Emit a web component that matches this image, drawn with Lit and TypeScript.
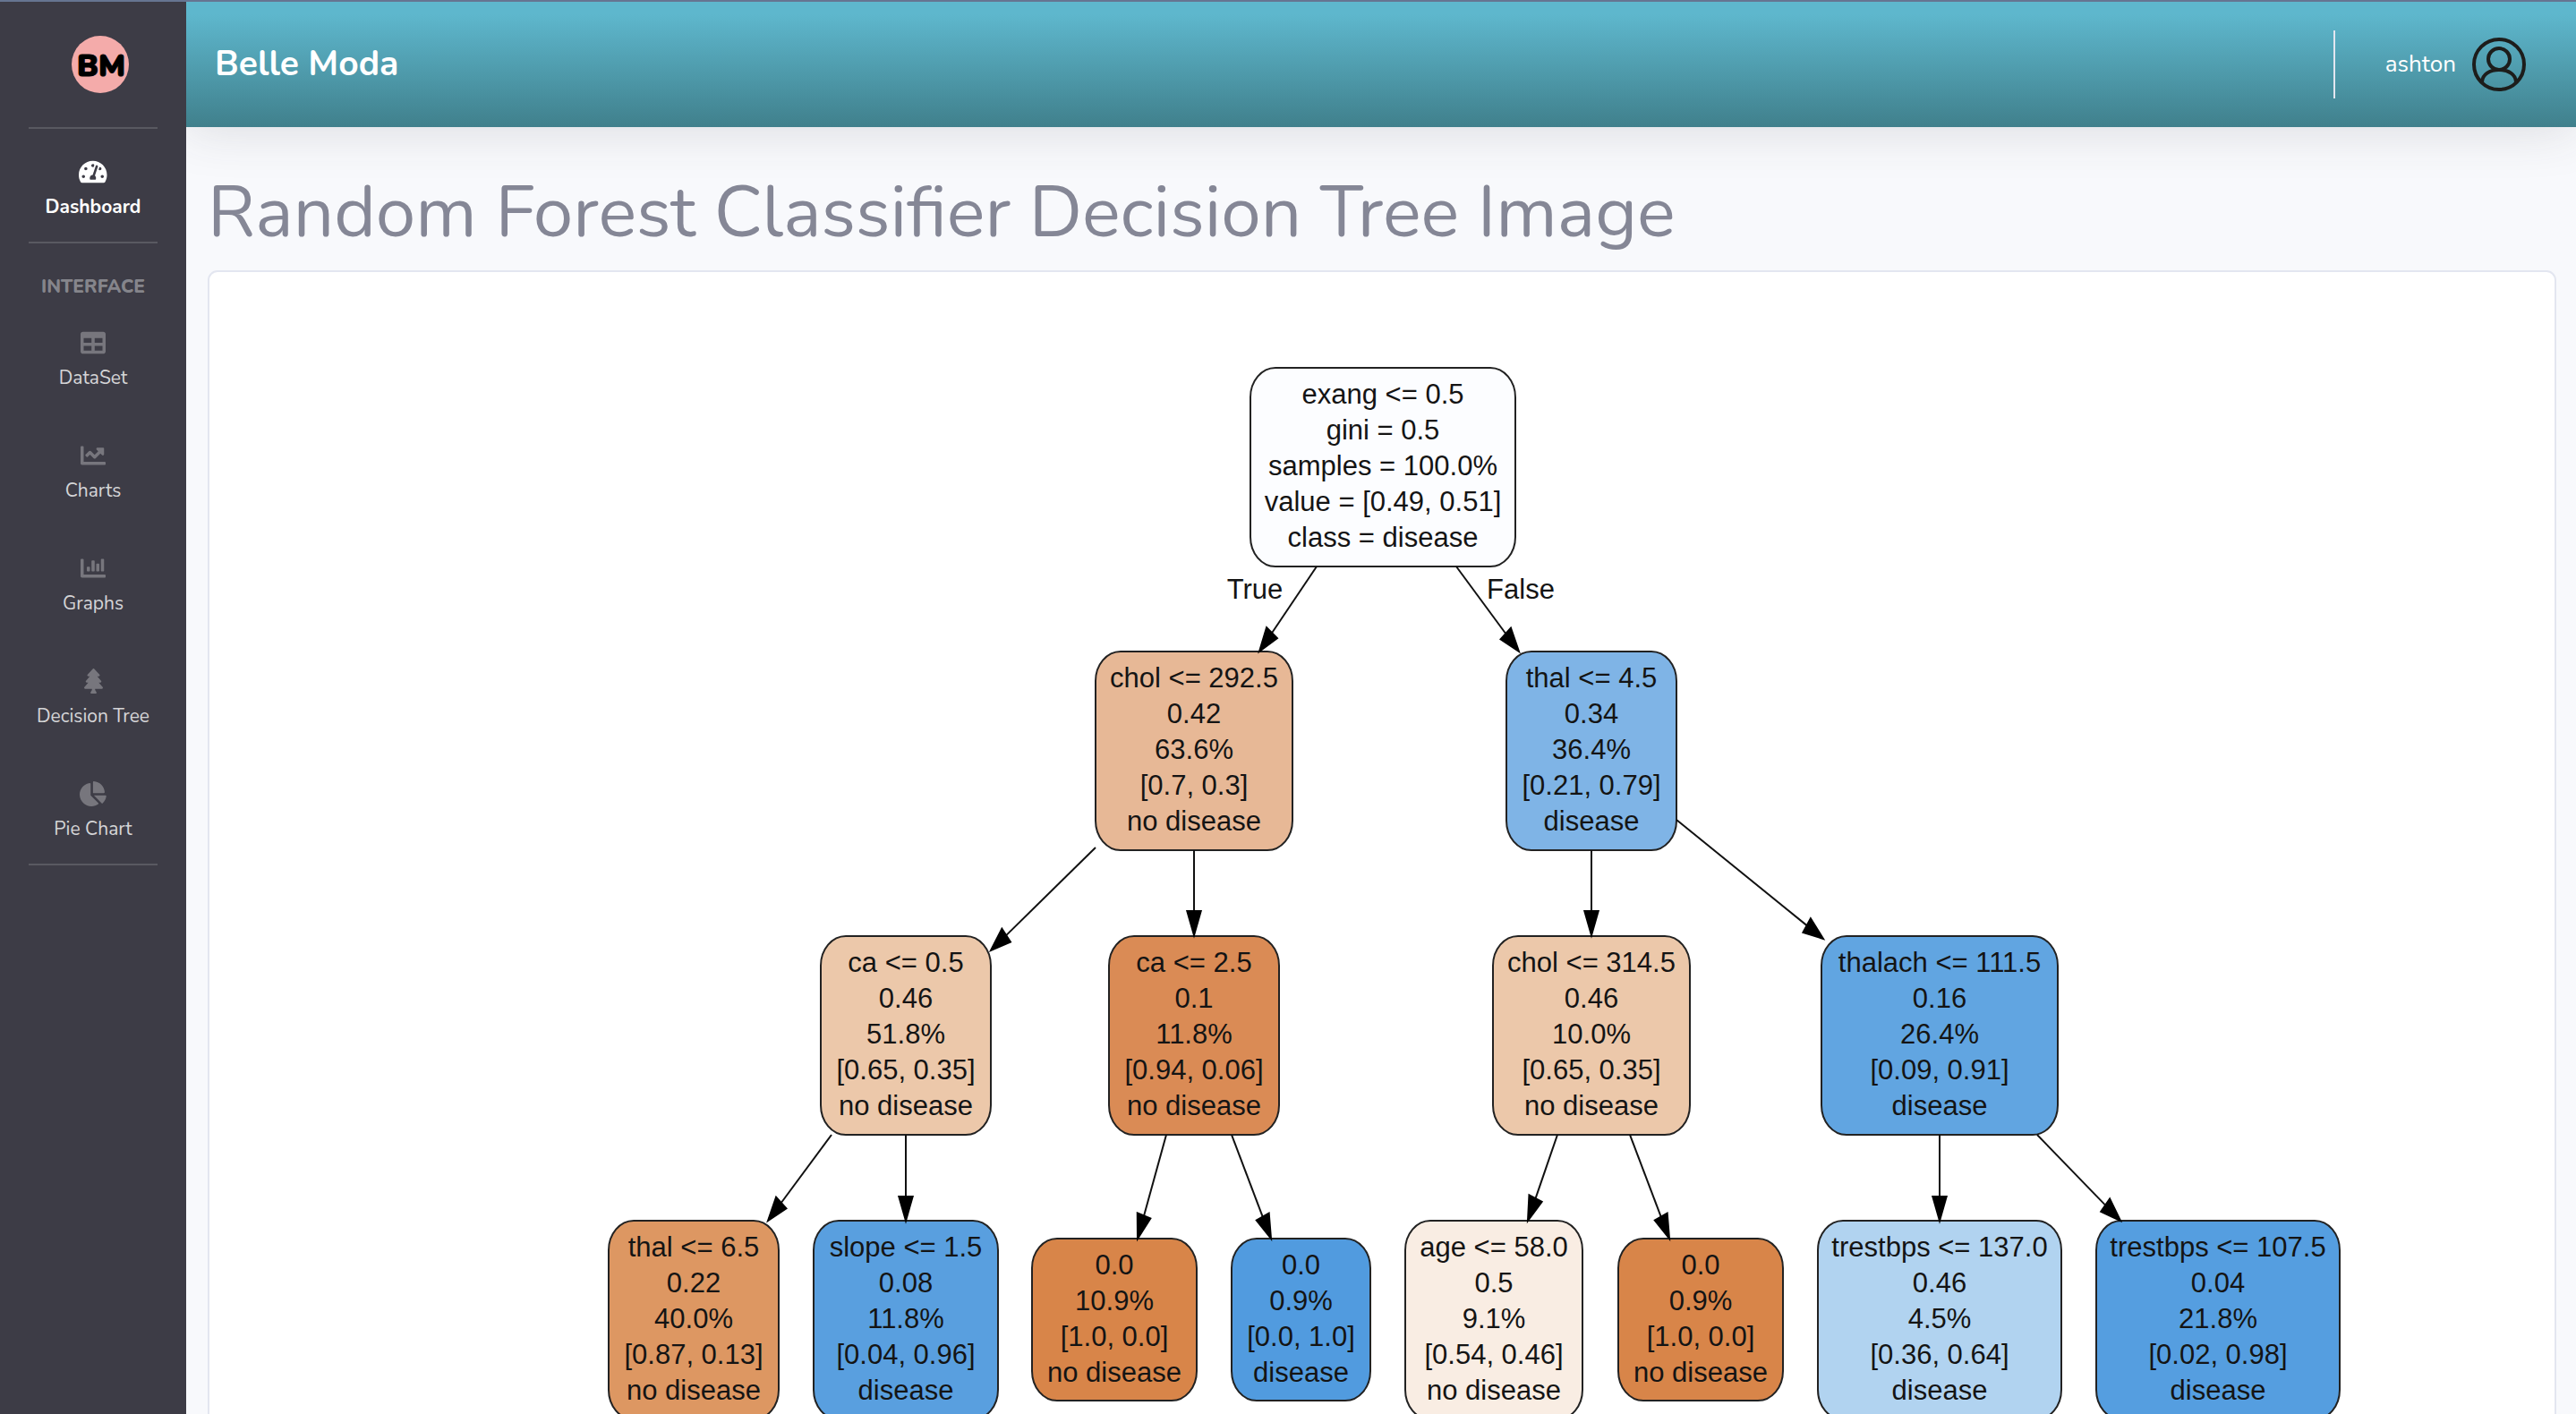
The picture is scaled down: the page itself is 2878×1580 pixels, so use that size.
import { LitElement, html, svg, css } from "lit";
import { customElement } from "lit/decorators.js";
import { classMap } from "lit/directives/class-map.js";

interface NavItem {
  label: string;
  icon: string;
  box: string;
}

interface TreeNode {
  x: number;
  y: number;
  w: number;
  h: number;
  fill: string;
  lines: string[];
}

type Edge = [number, number, number, number];

const DASHBOARD: NavItem = {
  label: "Dashboard",
  box: "0 0 576 512",
  icon: "M288 32C128.94 32 0 160.94 0 320c0 52.8 14.25 102.26 39.06 144.8 5.61 9.62 16.3 15.2 27.44 15.2h443c11.14 0 21.83-5.58 27.44-15.2C561.75 422.26 576 372.8 576 320c0-159.06-128.94-288-288-288zm0 64c14.71 0 26.58 10.13 30.32 23.65-1.11 2.26-2.64 4.23-3.45 6.67l-9.22 27.67c-5.13 3.49-10.97 6.01-17.64 6.01-17.67 0-32-14.33-32-32S270.33 96 288 96zM96 384c-17.67 0-32-14.33-32-32s14.33-32 32-32 32 14.33 32 32-14.33 32-32 32zm48-160c-17.67 0-32-14.33-32-32s14.33-32 32-32 32 14.33 32 32-14.33 32-32 32zm246.77-72.41l-61.33 184C343.13 347.33 352 364.54 352 384c0 11.72-3.38 22.55-8.88 32H232.88c-5.5-9.45-8.88-20.28-8.88-32 0-33.94 26.5-61.43 59.9-63.59l61.34-184.01c4.17-12.56 17.73-19.45 30.36-15.17 12.57 4.19 19.35 17.79 15.17 30.36zm14.66 57.2l15.52-46.55c3.47-1.29 7.13-2.23 11.05-2.23 17.67 0 32 14.33 32 32s-14.33 32-32 32c-11.38-.01-20.89-6.28-26.57-15.22zM480 384c-17.67 0-32-14.33-32-32s14.33-32 32-32 32 14.33 32 32-14.33 32-32 32z",
};

const INTERFACE: NavItem[] = [
  {
    label: "DataSet",
    box: "0 0 512 512",
    icon: "M464 32H48C21.49 32 0 53.49 0 80v352c0 26.51 21.49 48 48 48h416c26.51 0 48-21.49 48-48V80c0-26.51-21.49-48-48-48zM224 416H64v-96h160v96zm0-160H64v-96h160v96zm224 160H288v-96h160v96zm0-160H288v-96h160v96z",
  },
  {
    label: "Charts",
    box: "0 0 512 512",
    icon: "M496 384H64V80c0-8.84-7.16-16-16-16H16C7.16 64 0 71.16 0 80v336c0 17.67 14.33 32 32 32h464c8.84 0 16-7.16 16-16v-32c0-8.84-7.16-16-16-16zM464 96H345.94c-21.38 0-32.09 25.85-16.97 40.97l32.4 32.4L288 242.75l-73.37-73.37c-12.5-12.5-32.76-12.5-45.25 0l-68.69 68.69c-6.25 6.25-6.25 16.38 0 22.63l22.62 22.62c6.25 6.25 16.38 6.25 22.63 0L192 237.25l73.37 73.37c12.5 12.5 32.76 12.5 45.25 0l96-96 32.4 32.4c15.12 15.12 40.97 4.41 40.97-16.97V112c.01-8.84-7.15-16-15.99-16z",
  },
  {
    label: "Graphs",
    box: "0 0 512 512",
    icon: "M332.8 320h38.4c6.4 0 12.8-6.4 12.8-12.8V172.8c0-6.4-6.4-12.8-12.8-12.8h-38.4c-6.4 0-12.8 6.4-12.8 12.8v134.4c0 6.4 6.4 12.8 12.8 12.8zm96 0h38.4c6.4 0 12.8-6.4 12.8-12.8V76.8c0-6.4-6.4-12.8-12.8-12.8h-38.4c-6.4 0-12.8 6.4-12.8 12.8v230.4c0 6.4 6.4 12.8 12.8 12.8zm-288 0h38.4c6.4 0 12.8-6.4 12.8-12.8v-70.4c0-6.4-6.4-12.8-12.8-12.8h-38.4c-6.4 0-12.8 6.4-12.8 12.8v70.4c0 6.4 6.4 12.8 12.8 12.8zm96 0h38.4c6.4 0 12.8-6.4 12.8-12.8V108.8c0-6.4-6.4-12.8-12.8-12.8h-38.4c-6.4 0-12.8 6.4-12.8 12.8v198.4c0 6.4 6.4 12.8 12.8 12.8zM496 384H64V80c0-8.84-7.16-16-16-16H16C7.16 64 0 71.16 0 80v336c0 17.67 14.33 32 32 32h464c8.84 0 16-7.16 16-16v-32c0-8.84-7.16-16-16-16z",
  },
  {
    label: "Decision Tree",
    box: "0 0 384 512",
    icon: "M378.31 378.49L298.42 288h30.63c9.01 0 16.98-5 20.78-13.06 3.8-8.04 2.55-17.26-3.28-24.05L268.42 160h28.89c9.1 0 17.3-5.35 20.86-13.61 3.52-8.13 1.86-17.59-4.24-24.08L203.66 4.83c-6.03-6.45-17.28-6.45-23.32 0L70.06 122.31c-6.1 6.49-7.75 15.95-4.24 24.08C69.38 154.65 77.59 160 86.69 160h28.89l-78.14 90.91c-5.81 6.78-7.06 15.99-3.27 24.04C37.97 283 45.93 288 54.95 288h30.63L5.69 378.49c-6 6.79-7.36 16.09-3.56 24.26 3.75 8.05 12 13.25 21.01 13.25H160v24.45l-30.29 48.4c-5.32 10.64 2.42 23.16 14.31 23.16h95.96c11.89 0 19.63-12.52 14.31-23.16L224 440.45V416h136.86c9.01 0 17.26-5.2 21.01-13.25 3.8-8.17 2.44-17.47-3.56-24.26z",
  },
  {
    label: "Pie Chart",
    box: "0 0 544 512",
    icon: "M527.79 288H290.5l158.03 158.03c6.04 6.04 15.98 6.53 22.19.68 38.7-36.46 65.32-85.61 73.13-140.86 1.34-9.46-6.51-17.85-16.06-17.85zm-15.83-64.8C503.72 103.74 408.26 8.28 288.8.04 279.68-.59 272 7.1 272 16.24V240h223.77c9.14 0 16.82-7.68 16.19-16.8zM224 288V50.71c0-9.55-8.39-17.4-17.84-16.06C86.99 51.49-4.1 155.6.14 280.37 4.5 408.51 114.83 513.59 243.03 511.98c50.4-.63 96.97-16.87 135.26-44.03 7.9-5.6 8.42-17.23 1.57-24.08L224 288z",
  },
];

const NODES: TreeNode[] = [
  { x: 1163, y: 107, w: 296, h: 222, fill: "#fcfdff", lines: ["exang <= 0.5", "gini = 0.5", "samples = 100.0%", "value = [0.49, 0.51]", "class = disease"] },
  { x: 990, y: 424, w: 220, h: 222, fill: "#e7b896", lines: ["chol <= 292.5", "0.42", "63.6%", "[0.7, 0.3]", "no disease"] },
  { x: 1449, y: 424, w: 190, h: 222, fill: "#7fb4e6", lines: ["thal <= 4.5", "0.34", "36.4%", "[0.21, 0.79]", "disease"] },
  { x: 683, y: 742, w: 190, h: 222, fill: "#ecc8aa", lines: ["ca <= 0.5", "0.46", "51.8%", "[0.65, 0.35]", "no disease"] },
  { x: 1005, y: 742, w: 190, h: 222, fill: "#da8b55", lines: ["ca <= 2.5", "0.1", "11.8%", "[0.94, 0.06]", "no disease"] },
  { x: 1434, y: 742, w: 220, h: 222, fill: "#ecc8aa", lines: ["chol <= 314.5", "0.46", "10.0%", "[0.65, 0.35]", "no disease"] },
  { x: 1801, y: 742, w: 264, h: 222, fill: "#61a5e1", lines: ["thalach <= 111.5", "0.16", "26.4%", "[0.09, 0.91]", "disease"] },
  { x: 446, y: 1060, w: 190, h: 222, fill: "#dd9762", lines: ["thal <= 6.5", "0.22", "40.0%", "[0.87, 0.13]", "no disease"] },
  { x: 675, y: 1060, w: 206, h: 222, fill: "#599fdf", lines: ["slope <= 1.5", "0.08", "11.8%", "[0.04, 0.96]", "disease"] },
  { x: 919, y: 1080, w: 184, h: 181, fill: "#d88549", lines: ["0.0", "10.9%", "[1.0, 0.0]", "no disease"] },
  { x: 1142, y: 1080, w: 155, h: 181, fill: "#519bdf", lines: ["0.0", "0.9%", "[0.0, 1.0]", "disease"] },
  { x: 1336, y: 1060, w: 198, h: 222, fill: "#f9ede3", lines: ["age <= 58.0", "0.5", "9.1%", "[0.54, 0.46]", "no disease"] },
  { x: 1574, y: 1080, w: 184, h: 181, fill: "#d88549", lines: ["0.0", "0.9%", "[1.0, 0.0]", "no disease"] },
  { x: 1797, y: 1060, w: 272, h: 222, fill: "#b1d3f0", lines: ["trestbps <= 137.0", "0.46", "4.5%", "[0.36, 0.64]", "disease"] },
  { x: 2108, y: 1060, w: 272, h: 222, fill: "#559ee0", lines: ["trestbps <= 107.5", "0.04", "21.8%", "[0.02, 0.98]", "disease"] },
];

const EDGES: Edge[] = [
  [1237, 329, 1173, 424],
  [1393, 329, 1463, 424],
  [990, 643, 873, 758],
  [1100, 646, 1100, 741],
  [1544, 646, 1544, 741],
  [1639, 612, 1803, 745],
  [695, 964, 624, 1060],
  [778, 964, 778, 1060],
  [1069, 964, 1037, 1080],
  [1142, 964, 1186, 1080],
  [1506, 964, 1473, 1060],
  [1587, 964, 1631, 1080],
  [1933, 964, 1933, 1060],
  [2042, 964, 2135, 1060],
];

const UNIT_X = 2.2;
const UNIT_Y = 2.7;

@customElement("decision-tree")
export class DecisionTree extends LitElement {
  static styles = css`
    :host {
      display: block;
    }
    .tree {
      display: block;
      width: 100%;
      height: auto;
    }
    .node {
      stroke: #222;
      stroke-width: 2;
    }
    .edge {
      fill: none;
      stroke: #111;
      stroke-width: 2;
    }
    .head {
      fill: #000;
      stroke: #000;
      stroke-width: 2;
    }
    .label {
      font-family: "Liberation Sans", Arial, sans-serif;
      font-size: 31px;
      fill: #141414;
      text-anchor: middle;
    }
  `;

  private edge([x1, y1, x2, y2]: Edge) {
    const ux = (x2 - x1) / UNIT_X;
    const uy = (y2 - y1) / UNIT_Y;
    const len = Math.hypot(ux, uy);
    const dx = ux / len;
    const dy = uy / len;
    const bx = x2 - dx * 10 * UNIT_X;
    const by = y2 - dy * 10 * UNIT_Y;
    const px = -dy * 3.5 * UNIT_X;
    const py = dx * 3.5 * UNIT_Y;
    return svg`
      <path class="edge" d="M${x1} ${y1}L${bx} ${by}"></path>
      <path class="head" d="M${x2} ${y2}L${bx + px} ${by + py}L${bx - px} ${by - py}Z"></path>`;
  }

  private node(n: TreeNode) {
    return svg`
      <rect class="node" x=${n.x} y=${n.y} width=${n.w} height=${n.h} rx="28" ry="33" fill=${n.fill}></rect>
      ${n.lines.map(
        (line, i) => svg`<text class="label" x=${n.x + n.w / 2} y=${n.y + 40 + i * 40}>${line}</text>`
      )}`;
  }

  render() {
    return html`
      <svg class="tree" viewBox="0 0 2620 1360" role="img" aria-label="Decision tree">
        ${NODES.map((n) => this.node(n))}
        ${EDGES.map((e) => this.edge(e))}
        <text class="label" x="1168" y="365">True</text>
        <text class="label" x="1465" y="365">False</text>
      </svg>
    `;
  }
}

@customElement("app-root")
export class AppRoot extends LitElement {
  static styles = css`
    :host {
      display: block;
      height: 100vh;
      overflow: hidden;
      box-sizing: border-box;
      border-top: 2px solid #667591;
      background: #f8f9fc;
      font-family: Nunito, Lato, sans-serif;
      color: #858796;
    }
    .shell {
      display: flex;
      min-height: 100%;
    }
    .sidebar {
      flex: none;
      width: 208px;
      box-sizing: border-box;
      padding: 0 32px;
      background: #3d3c46;
      text-align: center;
      z-index: 1;
    }
    .brand {
      display: flex;
      justify-content: center;
      align-items: center;
      height: 140px;
      padding-left: 16px;
    }
    .logo {
      width: 64px;
      height: 64px;
    }
    .logo-disc {
      fill: #f4abaa;
    }
    .logo-text {
      font-weight: 900;
      font-size: 34px;
      text-anchor: middle;
      stroke: #000;
      stroke-width: 1;
    }
    .rule {
      height: 2px;
      margin: 0;
      border: 0;
      background: rgba(255, 255, 255, 0.15);
    }
    .item {
      display: flex;
      flex-direction: column;
      align-items: center;
      gap: 12px;
      height: 126px;
      box-sizing: border-box;
      padding-top: 34px;
      margin: 0 -16px;
      color: rgba(255, 255, 255, 0.8);
      font-size: 21px;
      line-height: 26px;
      text-decoration: none;
      white-space: nowrap;
    }
    .item.active {
      color: #fff;
      font-weight: 700;
    }
    .icon {
      height: 28px;
      fill: rgba(255, 255, 255, 0.3);
    }
    .active .icon {
      fill: #fff;
    }
    .group {
      margin: 32px -16px 0;
      padding-top: 1px;
      font-size: 21px;
      line-height: 30px;
      font-weight: 800;
      color: rgba(255, 255, 255, 0.4);
    }
    .page {
      flex: 1;
      min-width: 0;
    }
    .topbar {
      display: flex;
      align-items: center;
      justify-content: space-between;
      height: 140px;
      box-sizing: border-box;
      padding: 0 56px 0 32px;
      background: linear-gradient(180deg, #5eb7cd 10%, #40808c 100%);
      box-shadow: 0 4px 56px rgba(58, 59, 69, 0.15);
    }
    .site {
      color: #fff;
      font-size: 39px;
      line-height: 48px;
      font-weight: 700;
      text-decoration: none;
    }
    .user {
      display: flex;
      align-items: center;
      gap: 18px;
      height: 76px;
      padding-left: 56px;
      border-left: 2px solid #e3e6f0;
      color: #fff;
      font-size: 26px;
      line-height: 32px;
      text-decoration: none;
    }
    .avatar {
      width: 60px;
      height: 60px;
      fill: none;
      stroke: #1d1d1b;
      stroke-width: 4;
    }
    .content {
      padding: 48px 22px 0 24px;
    }
    .title {
      margin: 0 0 16px;
      font-size: 80px;
      line-height: 96px;
      font-weight: 400;
    }
    .card {
      overflow: hidden;
      border: 2px solid #e3e6f0;
      border-radius: 11px;
      background: #fff;
    }
  `;

  private item(entry: NavItem, active = false) {
    return html`
      <a class=${classMap({ item: true, active })} href="#">
        <svg class="icon" viewBox=${entry.box} aria-hidden="true"><path d=${entry.icon}></path></svg>
        <span>${entry.label}</span>
      </a>
    `;
  }

  render() {
    return html`
      <div class="shell">
        <nav class="sidebar">
          <a class="brand" href="#" aria-label="Home">
            <svg class="logo" viewBox="0 0 64 64">
              <circle class="logo-disc" cx="32" cy="32" r="32"></circle>
              <text class="logo-text" x="33" y="45">BM</text>
            </svg>
          </a>
          <hr class="rule" />
          ${this.item(DASHBOARD, true)}
          <hr class="rule" />
          <div class="group">INTERFACE</div>
          ${INTERFACE.map((entry) => this.item(entry))}
          <hr class="rule" />
        </nav>
        <div class="page">
          <header class="topbar">
            <a class="site" href="#">Belle Moda</a>
            <a class="user" href="#">
              <span>ashton</span>
              <svg class="avatar" viewBox="0 0 60 60" aria-hidden="true">
                <circle cx="30" cy="30" r="28"></circle>
                <circle cx="30" cy="24" r="12"></circle>
                <path d="M11 50C11 41 20 36 30 36S49 41 49 50"></path>
              </svg>
            </a>
          </header>
          <main class="content">
            <h1 class="title">Random Forest Classifier Decision Tree Image</h1>
            <section class="card">
              <decision-tree></decision-tree>
            </section>
          </main>
        </div>
      </div>
    `;
  }
}
